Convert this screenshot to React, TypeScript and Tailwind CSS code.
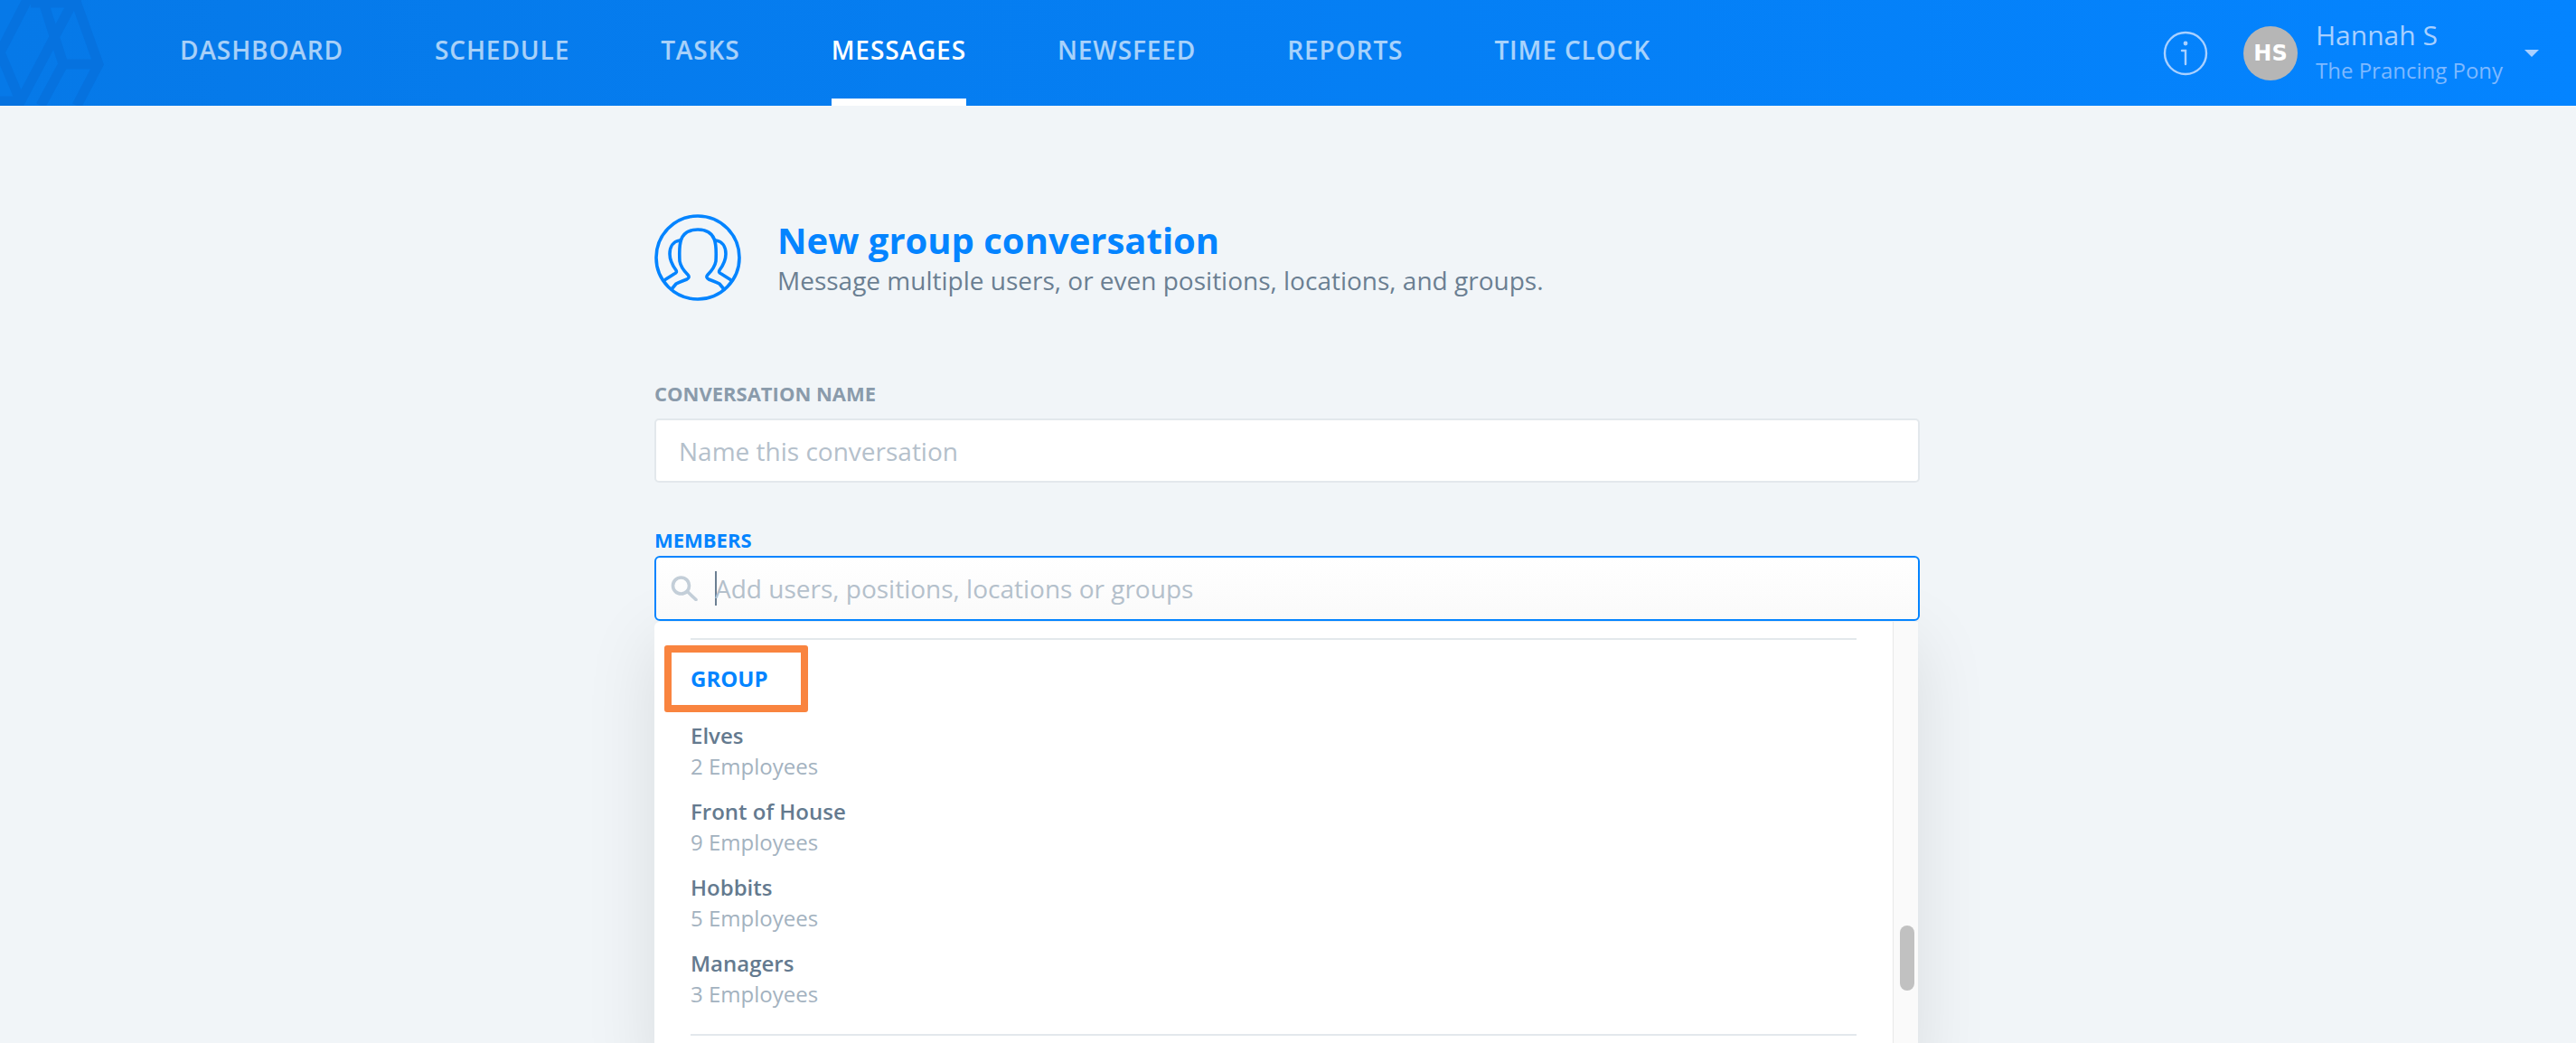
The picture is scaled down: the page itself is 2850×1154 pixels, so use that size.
import React from 'react';

const NAV_ITEMS = ['DASHBOARD', 'SCHEDULE', 'TASKS', 'MESSAGES', 'NEWSFEED', 'REPORTS', 'TIME CLOCK'];

const GROUPS = [
  { name: 'Elves', count: '2 Employees' },
  { name: 'Front of House', count: '9 Employees' },
  { name: 'Hobbits', count: '5 Employees' },
  { name: 'Managers', count: '3 Employees' },
];

const Logo = () => (
  <svg width="130" height="117" viewBox="0 0 130 117" fill="none" stroke="#0672df" strokeWidth="11" className="absolute left-0 top-0">
    <path d="M32 -4 L0 58 L24 115 M84 -4 L20 117 M46 -4 L70 71 L45 117 M82 -4 L109 71 L85 117 M70 71 H109 M34 3 H90 M-4 112 H26" />
  </svg>
);

const GroupIcon = () => (
  <svg width="96" height="96" viewBox="0 0 96 96" fill="none" stroke="#0484ff" strokeWidth="3.6" strokeLinejoin="round" strokeLinecap="round">
    <circle cx="48" cy="48" r="46" />
    <path d="M28 56 C29 62 33 67 37 71 C39 73 38 75 36 76 C31 78 27 79 24 81 L19 87 M68 56 C67 62 63 67 59 71 C57 73 58 75 60 76 C65 78 69 79 72 81 L77 87 M28 56 C27 38 27 21 48 21 C69 21 69 38 68 56" transform="translate(0,-4)" />
    <path d="M28 29 C21 30 17 36 17 44 C17 52 21 58 24 62 C25 64 24 65 22 66 L11 73 M68 29 C75 30 79 36 79 44 C79 52 75 58 72 62 C71 64 72 65 74 66 L85 73" />
  </svg>
);

const SearchIcon = () => (
  <svg width="30" height="28" viewBox="0 0 30 28" fill="none" stroke="#c3ced8" strokeWidth="3.6" strokeLinecap="round">
    <circle cx="11.5" cy="11" r="9" />
    <path d="M18.5 17.5 L28 26.5" />
  </svg>
);

export default function App() {
  return (
    <div className="relative h-[1154px] overflow-hidden bg-[#f1f5f8] font-['Open_Sans',sans-serif]">
      <header className="relative flex h-[117px] items-stretch bg-gradient-to-r from-[#0679e8] to-[#0484ff] pl-[199px] pr-[41px]">
        <Logo />
        <nav className="relative flex flex-1 gap-[101px]">
          {NAV_ITEMS.map((item) => (
            <a
              key={item}
              className={`flex items-center border-b-[8px] pt-[1px] text-[28px] font-semibold tracking-[0.9px] ${
                item === 'MESSAGES' ? 'border-white text-white' : 'border-transparent text-white/65'
              }`}
            >
              {item}
            </a>
          ))}
        </nav>
        <div className="relative flex items-center">
          <svg width="50" height="50" viewBox="0 0 50 50" fill="none" stroke="#a9d0ff" strokeWidth="2.4" strokeLinecap="round" className="mr-[39px]">
            <circle cx="25" cy="25" r="23" />
            <circle cx="25" cy="14" r="1.2" fill="#a9d0ff" />
            <path d="M21 22 H25 V37" />
          </svg>
          <div className="mr-[20px] flex h-[60px] w-[60px] items-center justify-center rounded-full bg-[#b6b6b6] font-['DejaVu_Sans',sans-serif] text-[24px] font-bold text-white">
            HS
          </div>
          <div className="mr-[25px] flex w-[206px] flex-col whitespace-nowrap pb-[3px]">
            <span className="mb-[4px] text-[30px] leading-[36px] text-[#a9d0ff]">Hannah S</span>
            <span className="text-[24px] leading-[33px] text-[#7fb9ff]">The Prancing Pony</span>
          </div>
          <div className="h-0 w-0 border-x-[8px] border-t-[8px] border-x-transparent border-t-[#a9d0ff]" />
        </div>
      </header>

      <main className="flex justify-center pr-[2px] pt-[120px]">
        <div className="w-[1400px]">
          <div className="flex items-center gap-[40px]">
            <GroupIcon />
            <div className="flex flex-col pb-[1px]">
              <h1 className="mb-[1px] text-[40px] font-bold leading-[50px] text-[#0484ff]">New group conversation</h1>
              <p className="text-[28px] leading-[36px] text-[#6b7f92]">
                Message multiple users, or even positions, locations, and groups.
              </p>
            </div>
          </div>

          <label className="mt-[88px] block text-[22px] font-bold leading-[28px] text-[#8a9bab]">CONVERSATION NAME</label>
          <div className="mt-[14px] flex h-[71px] items-center rounded-[5px] border-2 border-[#e3e8ec] bg-white pl-[25px] text-[28px] text-[#b4c0cb]">
            Name this conversation
          </div>

          <label className="mt-[49px] block text-[22px] font-bold leading-[28px] text-[#0484ff]">MEMBERS</label>
          <div className="relative mt-[4px]">
            <div className="relative z-10 flex h-[72px] items-center rounded-[6px] border-2 border-[#0484ff] bg-gradient-to-b from-white to-[#fafafa] pl-[16px] text-[28px] text-[#b4c0cb]">
              <SearchIcon />
              <span className="-mr-[2px] ml-[19px] h-[38px] w-[2px] bg-[#6b7f92]" />
              <span>Add users, positions, locations or groups</span>
            </div>

            <div className="absolute left-0 right-[2px] top-[73px] flex h-[500px] rounded-t-[6px] bg-white shadow-[0_20px_80px_rgba(0,0,0,0.1)]">
              <div className="flex-1 px-[40px] pt-[18px]">
                <div className="h-[2px] bg-[#e3e8ec]" />
                <div className="relative pt-[29px] text-[24px] font-bold leading-[28px] text-[#0484ff]">
                  GROUP
                  <div className="absolute left-[-29px] top-[6px] h-[74px] w-[159px] rounded-[3px] border-[8px] border-[#f9843f]" />
                </div>
                <ul className="mt-[32px]">
                  {GROUPS.map((group) => (
                    <li key={group.name} className="h-[84px]">
                      <div className="text-[24px] font-semibold leading-[34px] text-[#647a8f]">{group.name}</div>
                      <div className="text-[24px] leading-[34px] text-[#a3b2c0]">{group.count}</div>
                    </li>
                  ))}
                </ul>
                <div className="mt-[11px] h-[2px] bg-[#e3e8ec]" />
              </div>
              <div className="w-[28px] border-l border-[#e8e8e8] bg-[#fafafa] pl-[7px] pt-[336px]">
                <div className="h-[72px] w-[16px] rounded-[8px] bg-[#c1c1c1]" />
              </div>
            </div>
          </div>
        </div>
      </main>
    </div>
  );
}
